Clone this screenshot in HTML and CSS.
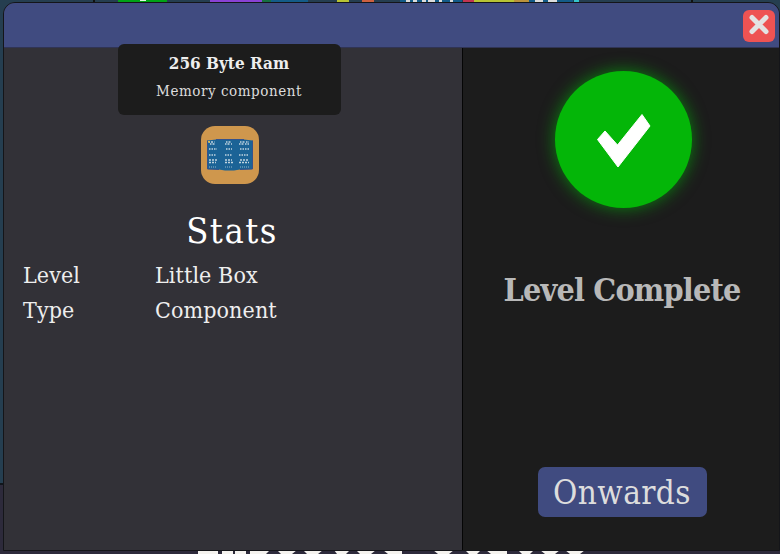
FILE: index.html
```html
<!DOCTYPE html>
<html lang="en">
<head>
<meta charset="utf-8">
<title>Level Complete</title>
<link rel="stylesheet" href="styles.css">
</head>
<body>
<svg class="backdrop" viewBox="0 0 780 554" aria-hidden="true">
  <rect width="780" height="484" fill="#253e50"/>
  <rect y="484" width="780" height="70" fill="#2d2a3b"/>
  <rect y="483" width="4" height="2" fill="#10151b"/>
  <g>
    <path fill="#111" d="M93 0h2v2h-2zM691 0h2v2h-2z"/>
    <path fill="#00a316" d="M118 0h49v2h-49z"/>
    <path fill="#e5f5e5" d="M140 0h6v1h-6z"/>
    <path fill="#8a42d4" d="M210 0h52v2h-52z"/>
    <path fill="#176f43" d="M262 0h9v2h-9z"/>
    <path fill="#145c88" d="M271 0h37v2h-37zM400 0h62v2h-62zM529 0h44v2h-44z"/>
    <path fill="#b8c434" d="M337 0h12v2h-12zM474 0h40v2h-40z"/>
    <path fill="#cd6040" d="M362 0h12v2h-12z"/>
    <path fill="#c23551" d="M463 0h11v2h-11z"/>
    <path fill="#bb923b" d="M514 0h15v2h-15z"/>
    <path fill="#ddd" d="M406 0h4v2h-4zM413 0h4v2h-4zM422 0h4v2h-4zM428 0h7v2h-7zM439 0h3v2h-3zM450 0h3v2h-3zM535 0h8v2h-8zM548 0h9v2h-9z"/>
    <path fill="#35c5cc" d="M574 0h5v2h-5z"/>
  </g>
  <path fill="#f5f3ef" d="M198 550h20v4h-20zM222 550h11v4h-11zM235 550h11v4h-11zM250 550h20l-4 4h-16zM277 550h20l-5 4h-11zM303 550h20l-5 4h-11zM334 550h16l-4 4h-9zM356 550h20l-5 4h-11zM383 550h19v4h-14zM433 550h21l-5 4h-11zM465 550h16l-4 4h-8zM486 550h21v4h-16zM518 550h16l-4 4h-8zM540 550h20l-5 4h-10zM565 550h20l-5 4h-10z"/>
</svg>
<main class="dialog">
  <header class="titlebar">
    <button class="close" aria-label="Close">
      <svg viewBox="0 0 32 32"><path d="M9 7.500L23 21.500M23 7.500L9 21.500" /></svg>
    </button>
  </header>
  <div class="content">
    <section class="details">
      <div class="card">
        <h2 class="card-title">256 Byte Ram</h2>
        <p class="card-kind">Memory component</p>
      </div>
      <div class="component">
        <svg viewBox="0 0 58 58" aria-hidden="true">
          <path fill="#1b6396" d="M6.500 14.500L15 13.500H43L51.500 14.500V43L39 43.500L33 44.500H24L18 43.500L6.500 43Z"/>
          <path fill="none" stroke="#35528c" d="M6.500 14.500V43L18 43.500M51.500 14.500V43L39 43.500M15 13.500H43"/>
          <g fill="none" stroke="#c0d4df" stroke-width="1.300">
            <path stroke-dasharray="1.500 1 2 1.500" d="M7.500 16H14M25 16H31M39 16H48M9 18H15M24 18H31M38 18H48"/>
            <path stroke-dasharray="1.500 1" d="M8 23H16M25 23H31M39 23H48M8 29H15M24 29H31M38 29H48"/>
            <path stroke-dasharray="2 1" d="M8 34H16M24 34H31M39 34H48M8 36.500H15M24 36.500H32M38 36.500H48"/>
            <path stroke="#6f9cb9" stroke-dasharray="1 1" d="M8 41H15M24 41H31M39 41H48"/>
          </g>
          <path fill="#ddba49" d="M7 15h2v1.500h-2z"/>
        </svg>
      </div>
      <h1 class="stats-title">Stats</h1>
      <dl class="stats">
        <dt>Level</dt><dd>Little Box</dd>
        <dt>Type</dt><dd>Component</dd>
      </dl>
    </section>
    <aside class="result">
      <div class="badge">
        <svg viewBox="0 0 137 137" aria-hidden="true"><path fill="#fff" stroke="#fff" stroke-linejoin="round" d="M42.500 68.500L50 60L62.500 74L87 43.500L95 55L63 96Z"/></svg>
      </div>
      <h2 class="result-title">Level Complete</h2>
      <button class="onwards">Onwards</button>
    </aside>
  </div>
</main>
</body>
</html>
```
FILE: styles.css
```css
* { box-sizing: border-box; }
body {
  margin: 0;
  width: 780px;
  height: 554px;
  overflow: hidden;
  background: #253e50;
  color: #eee;
  font-family: "Roboto Slab", "DejaVu Serif Condensed", "DejaVu Serif", serif;
  font-stretch: condensed;
}
h1, h2, p, dl, dd { margin: 0; }
button { border: 0; padding: 0; color: inherit; font: inherit; }
.backdrop { position: absolute; inset: 0; width: 780px; height: 554px; }
.dialog {
  position: relative;
  width: 777px;
  height: 549px;
  margin: 2px 0 0 3px;
  border: 1px solid #141519;
  border-radius: 12px 12px 0 0;
  background: #323137;
}
.titlebar {
  display: flex;
  justify-content: flex-end;
  height: 45px;
  padding: 7px 4px 0 0;
  border-bottom: 1px solid #303454;
  border-radius: 11px 11px 0 0;
  background: #404b80;
}
.close { width: 32px; height: 32px; border-radius: 6px; background: #ee5353; }
.close svg { display: block; fill: none; stroke: #e3e3e3; stroke-width: 5; stroke-linecap: round; }
.content { display: flex; height: 502px; }
.details { display: flex; flex-direction: column; align-items: center; width: 458px; padding-right: 8px; }
.card {
  width: 223px;
  height: 71px;
  flex: none;
  margin-top: -4px;
  padding-top: 8px;
  border-radius: 6px;
  background: #1c1c1c;
  text-align: center;
  white-space: nowrap;
}
.card-title { font-size: 17px; line-height: 23px; }
.card-kind { margin-top: 6px; font-size: 15px; line-height: 20px; letter-spacing: .55px; color: #ddd; }
.component { width: 58px; height: 58px; flex: none; margin: 11px 0 0 1px; border-radius: 14px; background: #cf974d; }
.component svg { display: block; }
.stats-title { margin: 19px 0 0 6px; font-size: 36px; line-height: 56px; font-weight: 400; letter-spacing: 1.5px; color: #fff; }
.stats {
  display: grid;
  grid-template-columns: 132px 1fr;
  grid-auto-rows: 35px;
  align-self: stretch;
  margin: -1px 0 0 19px;
  font-size: 23px;
  line-height: 35px;
  letter-spacing: .1px;
  white-space: nowrap;
}
.result {
  display: flex;
  flex: 1;
  flex-direction: column;
  align-items: center;
  border-left: 1px solid #050505;
  background: #1c1c1c;
}
.badge {
  width: 137px;
  height: 137px;
  margin: 23px 0 0 5px;
  border-radius: 50%;
  background: #04b608;
  box-shadow: 0 0 16px 1px rgba(0, 182, 8, .6);
}
.badge svg { display: block; }
.result-title { margin: 59px 0 0 2px; font-size: 32px; line-height: 46px; letter-spacing: -.8px; color: #b8b8b8; white-space: nowrap; }
.onwards {
  width: 169px;
  height: 50px;
  margin: 154px 0 0 3px;
  padding: 2px 1px 0 0;
  border-radius: 7px;
  background: #404b80;
  color: #ddd;
  font-size: 33px;
  line-height: 48px;
  letter-spacing: .4px;
  white-space: nowrap;
}
```
